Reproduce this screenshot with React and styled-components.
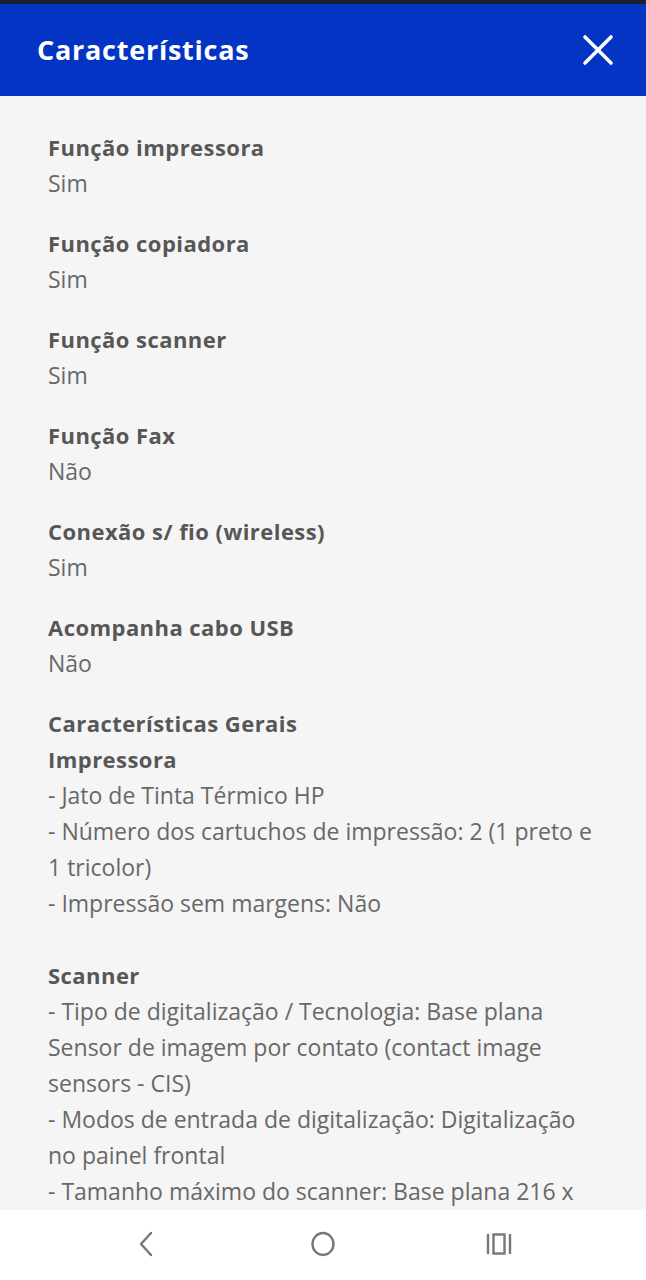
import React from 'react';
import styled, { createGlobalStyle } from 'styled-components';

const GlobalStyle = createGlobalStyle`
  html, body {
    margin: 0;
    padding: 0;
    background: #f5f5f5;
  }
  * {
    box-sizing: border-box;
  }
`;

const specs = [
  { label: 'Função impressora', value: 'Sim' },
  { label: 'Função copiadora', value: 'Sim' },
  { label: 'Função scanner', value: 'Sim' },
  { label: 'Função Fax', value: 'Não' },
  { label: 'Conexão s/ fio (wireless)', value: 'Sim' },
  { label: 'Acompanha cabo USB', value: 'Não' },
];

const general = [
  {
    title: 'Impressora',
    lines: [
      '- Jato de Tinta Térmico HP',
      '- Número dos cartuchos de impressão: 2 (1 preto e\n1 tricolor)',
      '- Impressão sem margens: Não',
    ],
  },
  {
    title: 'Scanner',
    lines: [
      '- Tipo de digitalização / Tecnologia: Base plana\nSensor de imagem por contato (contact image\nsensors - CIS)',
      '- Modos de entrada de digitalização: Digitalização\nno painel frontal',
      '- Tamanho máximo do scanner: Base plana 216 x\n297 mm',
      '- Resolução de digitalização: até 1200 dpi',
    ],
  },
];

export default function App() {
  return (
    <Screen>
      <GlobalStyle />
      <StatusStrip />
      <Header>
        <Title>Características</Title>
        <CloseButton aria-label="Fechar">
          <svg width="32" height="32" viewBox="0 0 32 32">
            <path d="M3 3L29 29M29 3L3 29" stroke="#fff" strokeWidth="3.6" strokeLinecap="round" />
          </svg>
        </CloseButton>
      </Header>

      <Content>
        {specs.map((s, i) => (
          <Spec key={'spec_' + i}>
            <Label>{s.label}</Label>
            <Value>{s.value}</Value>
          </Spec>
        ))}

        <Spec>
          <Label>Características Gerais</Label>
          {general.map((g, i) => (
            <Group key={'g_' + i} first={i == 0}>
              <Label>{g.title}</Label>
              {g.lines.map((l, j) => (
                <Value key={'l_' + j}>{l}</Value>
              ))}
            </Group>
          ))}
        </Spec>
      </Content>

      <NavBar>
        <NavIcon>
          <svg width="22" height="30" viewBox="0 0 22 30">
            <path d="M15 4L5 15L15 26" fill="none" stroke="#777" strokeWidth="2.4" strokeLinecap="round" strokeLinejoin="round" />
          </svg>
        </NavIcon>
        <NavIcon>
          <svg width="28" height="30" viewBox="0 0 28 30">
            <ellipse cx="14" cy="15" rx="10.5" ry="11" fill="none" stroke="#777" strokeWidth="2.4" />
          </svg>
        </NavIcon>
        <NavIcon>
          <svg width="28" height="30" viewBox="0 0 28 30">
            <path d="M3 5V25M25 5V25" stroke="#777" strokeWidth="2.4" />
            <rect x="8.5" y="5.5" width="11" height="19" fill="none" stroke="#777" strokeWidth="2.4" />
          </svg>
        </NavIcon>
      </NavBar>
    </Screen>
  );
}

const Screen = styled.div`
  width: 646px;
  height: 1280px;
  display: flex;
  flex-direction: column;
  overflow: hidden;
  font-family: 'Open Sans', 'Noto Sans', sans-serif;
`;
const StatusStrip = styled.div`
  height: 4px;
  background: #1d1f2a;
  flex-shrink: 0;
`;
const Header = styled.header`
  height: 92px;
  flex-shrink: 0;
  background: #0334c3;
  display: flex;
  align-items: center;
  justify-content: space-between;
  padding: 0 32px 0 37px;
`;
const Title = styled.h1`
  margin: 0 0 2px;
  font-size: 27px;
  font-weight: 700;
  color: #fff;
  letter-spacing: 0.75px;
`;
const CloseButton = styled.button`
  background: none;
  border: none;
  padding: 0;
  display: flex;
  cursor: pointer;
`;
const Content = styled.main`
  flex: 1;
  overflow: hidden;
  background: #f5f5f5;
  padding: 33px 20px 0 48px;
  display: flex;
  flex-direction: column;
  gap: 24px;
`;
const Spec = styled.section`
  display: flex;
  flex-direction: column;
`;
const Group = styled.div`
  display: flex;
  flex-direction: column;
  margin-top: ${({ first }) => (first ? '0' : '36px')};
`;
const Label = styled.h3`
  margin: 0;
  font-size: 22px;
  line-height: 36px;
  font-weight: 700;
  color: #575757;
  letter-spacing: 0.45px;
`;
const Value = styled.p`
  margin: 0;
  font-size: 23px;
  line-height: 36px;
  font-weight: 400;
  color: #686868;
  white-space: pre-line;
`;
const NavBar = styled.nav`
  height: 70px;
  flex-shrink: 0;
  background: #fff;
  display: flex;
  align-items: center;
  justify-content: center;
  gap: 148px;
  padding-bottom: 2px;
`;
const NavIcon = styled.button`
  background: none;
  border: none;
  padding: 0;
  display: flex;
  width: 28px;
  justify-content: center;
`;
